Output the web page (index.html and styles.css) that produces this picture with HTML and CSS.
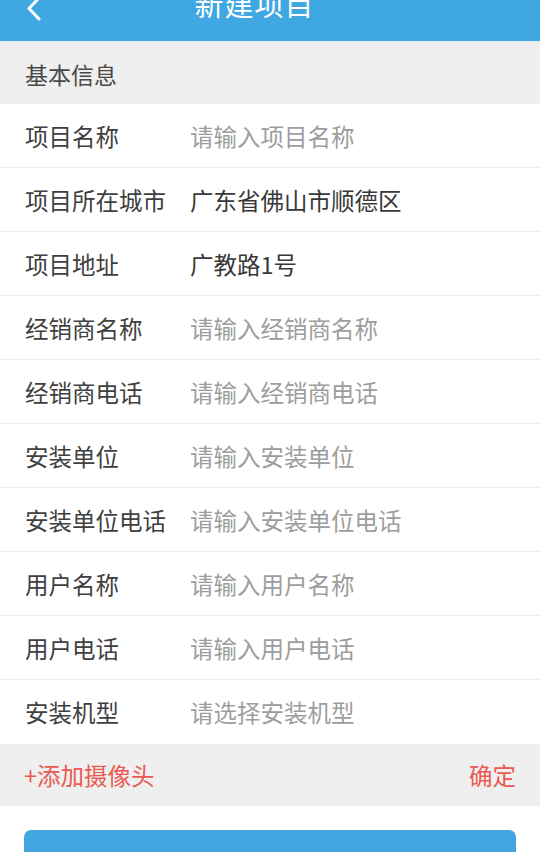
FILE: index.html
```html
<!DOCTYPE html>
<html lang="zh-CN">
<head>
<meta charset="utf-8">
<title>新建项目</title>
<link rel="stylesheet" href="styles.css">
</head>
<body>
<div class="page">
  <header class="topbar">
    <span class="back">
      <svg width="18" height="22" viewBox="0 0 18 22"><path d="M14 -2 L4 8.5 L14 19" fill="none" stroke="#fff" stroke-width="3" stroke-linecap="round" stroke-linejoin="round"/></svg>
    </span>
    <h1 class="title">新建项目</h1>
  </header>
  <div class="section-title">基本信息</div>
  <ul class="form">
    <li class="row"><span class="label">项目名称</span><span class="ph">请输入项目名称</span></li>
    <li class="row"><span class="label">项目所在城市</span><span class="val">广东省佛山市顺德区</span></li>
    <li class="row"><span class="label">项目地址</span><span class="val">广教路1号</span></li>
    <li class="row"><span class="label">经销商名称</span><span class="ph">请输入经销商名称</span></li>
    <li class="row"><span class="label">经销商电话</span><span class="ph">请输入经销商电话</span></li>
    <li class="row"><span class="label">安装单位</span><span class="ph">请输入安装单位</span></li>
    <li class="row"><span class="label">安装单位电话</span><span class="ph">请输入安装单位电话</span></li>
    <li class="row"><span class="label">用户名称</span><span class="ph">请输入用户名称</span></li>
    <li class="row"><span class="label">用户电话</span><span class="ph">请输入用户电话</span></li>
    <li class="row last"><span class="label">安装机型</span><span class="ph">请选择安装机型</span></li>
  </ul>
  <div class="camera-bar">
    <span class="add">+添加摄像头</span>
    <span class="ok">确定</span>
  </div>
  <div class="btn-wrap">
    <button class="submit"><span class="submit-text">提交</span></button>
  </div>
</div>
</body>
</html>
```

FILE: styles.css
```css
html, body {
  margin: 0;
  padding: 0;
  background: #fff;
}
body {
  font-family: "Noto Sans CJK SC", "Noto Sans", sans-serif;
  color: #3f3f3f;
  overflow: hidden;
}
.page {
  width: 540px;
  height: 852px;
  overflow: hidden;
}
.topbar {
  height: 41px;
  background: #3fa7e1;
  border-bottom: 2px solid #e3edf3;
  display: flex;
  align-items: flex-start;
  justify-content: center;
  padding-right: 31px;
  position: relative;
  overflow: hidden;
}
.back {
  position: absolute;
  left: 25px;
  top: 0;
  width: 18px;
  height: 22px;
}
.back svg { display: block; }
.title {
  margin: 0;
  margin-top: -17px;
  font-size: 29px;
  font-weight: normal;
  line-height: 40px;
  color: #fff;
  letter-spacing: 1px;
}
.section-title {
  height: 61px;
  background: #efefef;
  display: flex;
  align-items: center;
  padding-left: 25px;
  font-size: 23px;
  color: #484848;
}
.form {
  list-style: none;
  margin: 0;
  padding: 0;
}
.row {
  height: 63px;
  border-bottom: 1px solid #ececec;
  display: flex;
  align-items: center;
  font-size: 23.5px;
}
.row.last {
  height: 64px;
  border-bottom: none;
}
.label {
  width: 165px;
  padding-left: 25px;
  color: #404040;
  white-space: nowrap;
}
.ph {
  color: #9d9d9d;
}
.val {
  color: #383838;
}
.camera-bar {
  height: 62px;
  background: #efefef;
  display: flex;
  align-items: center;
  justify-content: space-between;
  padding: 0 24px;
  font-size: 23.5px;
  color: #ea5a52;
}
.btn-wrap {
  padding: 24px 24px 0;
}
.submit {
  display: flex;
  align-items: flex-end;
  justify-content: center;
  width: 100%;
  height: 80px;
  padding: 0 0 20px;
  border: none;
  border-radius: 7px;
  background: #42a6e0;
  color: #fff;
  font-family: inherit;
  font-size: 24px;
}
.submit-text {
  line-height: 30px;
}
```
